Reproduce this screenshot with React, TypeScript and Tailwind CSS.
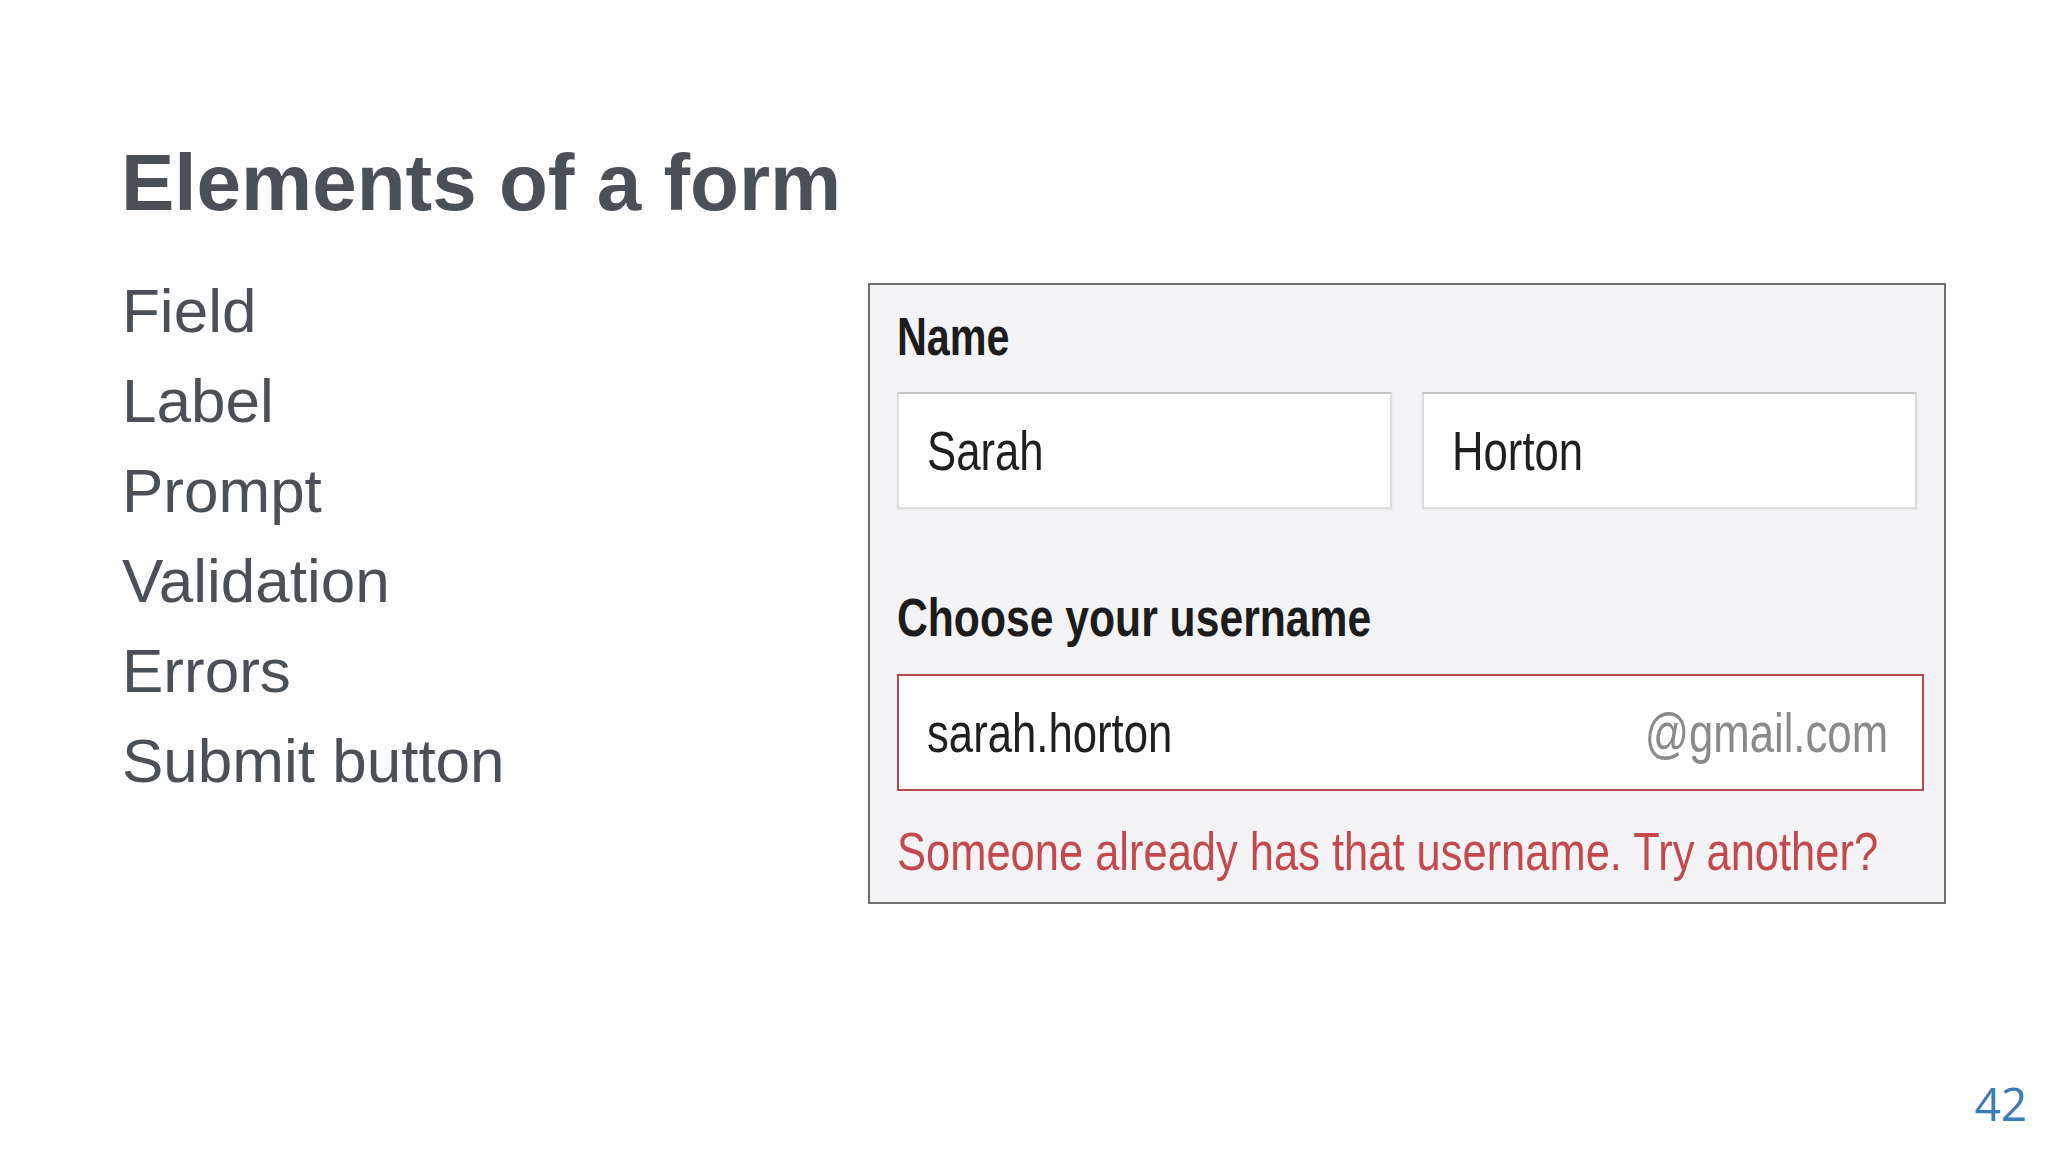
import React from 'react';

const items = ['Field', 'Label', 'Prompt', 'Validation', 'Errors', 'Submit button'];

// the form picture in the slide is squeezed sideways, so its text is too
const squeeze = 'inline-block whitespace-nowrap origin-left scale-x-[0.78]';
const squeezeWide = 'inline-block whitespace-nowrap origin-left scale-x-[0.805]';

function TextInput({ value }: { value: string }) {
  return (
    <div className="flex h-[117px] w-[495px] items-center border-2 border-[#dcdcdc] border-t-[#c6c6c6] bg-white pl-[28px] shadow-[0_1px_2px_rgba(0,0,0,0.06)]">
      <span className={`${squeeze} text-[56px] leading-none text-[#1f1f1f]`}>{value}</span>
    </div>
  );
}

export default function App() {
  return (
    <div
      className="relative flex h-[1152px] w-[2048px] flex-col overflow-hidden bg-[#fefefe]"
      style={{ fontFamily: '"Liberation Sans", Arial, sans-serif' }}
    >
      <h1 className="pl-[121px] pt-[143px] text-[80px] font-bold leading-[80px] text-[#4b5056]">
        Elements of a form
      </h1>

      <div className="mt-[43px] flex items-start">
        <ul className="w-[868px] shrink-0 pl-[122px] text-[62px] leading-[90px] text-[#4b5056]">
          {items.map((it) => (
            <li key={it}>{it}</li>
          ))}
        </ul>

        <div className="mt-[17px] flex h-[621px] w-[1078px] shrink-0 flex-col border-2 border-[#6f6f6f] bg-[#f4f4f6] pl-[27px] pt-[22px]">
          <div className="h-[60px] text-[53px] font-bold leading-[60px] text-[#1c1c1c]">
            <span className={squeeze}>Name</span>
          </div>

          <div className="mt-[25px] flex gap-[30px]">
            <TextInput value="Sarah" />
            <TextInput value="Horton" />
          </div>

          <div className="mt-[79px] h-[60px] text-[53px] font-bold leading-[60px] text-[#1c1c1c]">
            <span className={squeezeWide}>Choose your username</span>
          </div>

          <div className="mt-[26px] flex h-[117px] w-[1027px] items-center justify-between border-2 border-[#b9474d] bg-white pl-[28px] pr-[34px]">
            <span className={`${squeeze} text-[56px] leading-none text-[#1f1f1f]`}>sarah.horton</span>
            <span className="inline-block origin-right scale-x-[0.78] whitespace-nowrap text-[56px] leading-none text-[#8a8a8a]">
              @gmail.com
            </span>
          </div>

          <div className="mt-[30px] h-[60px] text-[54px] leading-[60px] text-[#c4494e]">
            <span className={squeezeWide}>Someone already has that username. Try another?</span>
          </div>
        </div>
      </div>

      <div className="mt-auto flex justify-end pb-[26px] pr-[21px]">
        <span
          className="text-[46px] leading-none text-[#3a7db5]"
          style={{ fontFamily: '"Open Sans", "Noto Sans", sans-serif' }}
        >
          42
        </span>
      </div>
    </div>
  );
}
